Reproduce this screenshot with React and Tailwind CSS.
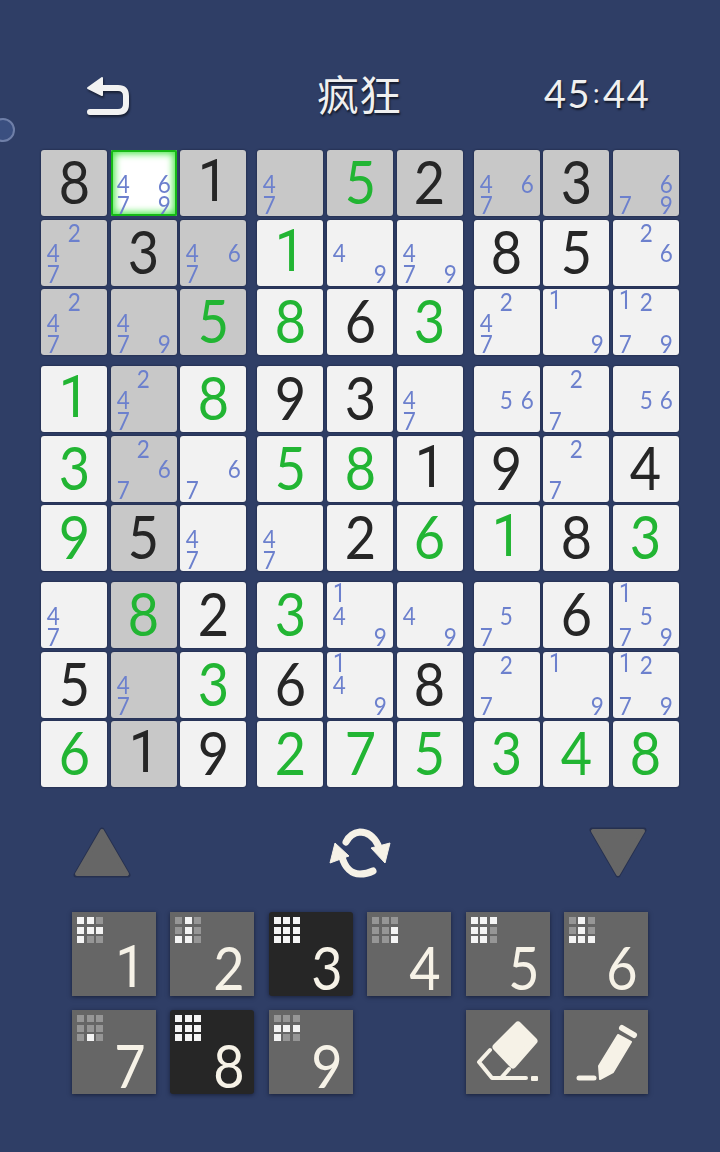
import React from "react";

// each row: digit = given, "g" prefix = entered by player (green), array = pencil marks
const rows = [
  [8, [4, 6, 7, 9], 1, [4, 7], "g5", 2, [4, 6, 7], 3, [6, 7, 9]],
  [[2, 4, 7], 3, [4, 6, 7], "g1", [4, 9], [4, 7, 9], 8, 5, [2, 6]],
  [[2, 4, 7], [4, 7, 9], "g5", "g8", 6, "g3", [2, 4, 7], [1, 9], [1, 2, 7, 9]],
  ["g1", [2, 4, 7], "g8", 9, 3, [4, 7], [5, 6], [2, 7], [5, 6]],
  ["g3", [2, 6, 7], [6, 7], "g5", "g8", 1, 9, [2, 7], 4],
  ["g9", 5, [4, 7], [4, 7], 2, "g6", "g1", 8, "g3"],
  [[4, 7], "g8", 2, "g3", [1, 4, 9], [4, 9], [5, 7], 6, [1, 5, 7, 9]],
  [5, [4, 7], "g3", 6, [1, 4, 9], 8, [2, 7], [1, 9], [1, 2, 7, 9]],
  ["g6", 1, 9, "g2", "g7", "g5", "g3", "g4", "g8"],
];

const selected = { r: 0, c: 1 };

const keys = [
  { n: 1, dots: "110111100" },
  { n: 2, dots: "010010110" },
  { n: 3, dots: "111111111", done: true },
  { n: 4, dots: "000001001" },
  { n: 5, dots: "111110110" },
  { n: 6, dots: "010010111" },
  { n: 7, dots: "000000010" },
  { n: 8, dots: "111111111", done: true },
  { n: 9, dots: "000111100" },
];

// Lato's 1 has a foot, Roboto's doesn't
const oneFont = (n) => (Number(n) === 1 ? "[font-family:Roboto,sans-serif]" : "");

const Notes = ({ marks }) => (
  <div className="grid h-[66px] w-[66px] grid-cols-3 grid-rows-3 p-[2px] text-[25px] leading-[20px] text-[#6c80cd]">
    {[1, 2, 3, 4, 5, 6, 7, 8, 9].map((n) => (
      <span key={n} className={`flex scale-x-90 items-center justify-center ${oneFont(n)}`}>
        {marks.includes(n) ? n : ""}
      </span>
    ))}
  </div>
);

const Cell = ({ value, r, c }) => {
  const isSelected = r === selected.r && c === selected.c;
  const sameBox = Math.floor(r / 3) === Math.floor(selected.r / 3) && Math.floor(c / 3) === Math.floor(selected.c / 3);
  const isPeer = r === selected.r || c === selected.c || sameBox;

  let bg = "bg-[#f2f2f2] rounded-[3px] shadow-[0_0_2px_rgba(15,20,40,0.8)]";
  if (isPeer) bg = "bg-[#c8c8c8] rounded-[3px] shadow-[0_0_2px_rgba(15,20,40,0.8)]";
  if (isSelected) bg = "bg-white rounded-[2px] shadow-[inset_0_0_0_2px_#16b816,inset_0_0_7px_4px_#4fe84f]";

  if (Array.isArray(value)) {
    return (
      <div className={`h-[66px] w-[66px] ${bg}`}>
        <Notes marks={value} />
      </div>
    );
  }

  const entered = typeof value === "string";
  const digit = entered ? value.slice(1) : value;
  return (
    <div className={`flex h-[66px] w-[66px] items-center justify-center pb-[4px] text-[60px] leading-[60px] ${bg} ${entered ? "text-[#22b533]" : "text-[#262626]"}`}>
      <span className={`scale-x-90 ${oneFont(digit)}`}>{digit}</span>
    </div>
  );
};

const Board = () => (
  <div className="mx-[41px] mt-[33px] grid grid-cols-3 gap-[11px]">
    {[0, 3, 6].map((br) =>
      [0, 3, 6].map((bc) => (
        <div key={`${br}-${bc}`} className="grid grid-cols-3 gap-[3.5px]">
          {[0, 1, 2].map((i) =>
            [0, 1, 2].map((j) => (
              <Cell key={`${i}-${j}`} value={rows[br + i][bc + j]} r={br + i} c={bc + j} />
            ))
          )}
        </div>
      ))
    )}
  </div>
);

const BackIcon = () => (
  <svg width="48" height="44" viewBox="0 0 48 44" className="drop-shadow-[1px_2px_1px_rgba(0,0,0,0.5)]">
    <path d="M17 5 L3 15 L17 22 Z" fill="#f2f2f2" stroke="#f2f2f2" strokeWidth="2" strokeLinejoin="round" />
    <path d="M15 15 H33 Q41 15 41 23 V31 Q41 39 33 39 H5" fill="none" stroke="#f2f2f2" strokeWidth="6" strokeLinecap="round" />
  </svg>
);

const Triangle = ({ down }) => (
  <svg width="58" height="52" viewBox="0 0 58 52">
    <path
      d={down ? "M3 3 H55 L29 48 Z" : "M29 3 L55 48 H3 Z"}
      fill="#26304f"
      stroke="#26304f"
      strokeWidth="5"
      strokeLinejoin="round"
    />
    <path d={down ? "M4 4 H54 L29 47 Z" : "M29 4 L54 47 H4 Z"} fill="#666666" stroke="#666666" strokeWidth="4" strokeLinejoin="round" />
  </svg>
);

const RefreshIcon = () => (
  <svg width="64" height="54" viewBox="0 0 64 54">
    <g fill="none" stroke="#f6f2e7" strokeWidth="7" strokeLinecap="round">
      <path d="M18 16 A18 18 0 0 1 32 6 C40 6 46 11 50 19" />
      <path d="M14 31 C17 42 24 48 32 48 C37 48 41 47 45 45" />
    </g>
    <path d="M43 22 L62 17 L57 37 Z" fill="#f6f2e7" stroke="#f6f2e7" strokeLinejoin="round" />
    <path d="M7 17 L2 37 L21 30 Z" fill="#f6f2e7" stroke="#f6f2e7" strokeLinejoin="round" />
  </svg>
);

const EraserIcon = () => (
  <svg width="84" height="84" viewBox="0 0 84 84">
    <path d="M52 15 L68 31 L47 55 L30 37 Z" fill="#f6f2e7" stroke="#f6f2e7" strokeWidth="7" strokeLinejoin="round" />
    <g fill="none" stroke="#f6f2e7" strokeWidth="4" strokeLinecap="round" strokeLinejoin="round">
      <path d="M24 40 L13 52 L26 68 H60" />
      <path d="M43 59 L35 68" />
    </g>
    <rect x="65" y="66" width="7" height="5" rx="1" fill="#f6f2e7" />
  </svg>
);

const PencilIcon = () => (
  <svg width="84" height="84" viewBox="0 0 84 84">
    <path d="M58 18 L70 25" stroke="#f6f2e7" strokeWidth="6" strokeLinecap="round" />
    <path d="M54 25 L67 32 L49 62 L36 69 L35 56 Z" fill="#f6f2e7" stroke="#f6f2e7" strokeWidth="2" strokeLinejoin="round" />
    <path d="M15 68 H30" stroke="#f6f2e7" strokeWidth="5" strokeLinecap="round" />
  </svg>
);

const NumberKey = ({ n, dots, done }) => (
  <div className={`flex h-[84px] w-[84px] flex-col text-[#f6f2e7] shadow-[0_1px_4px_rgba(15,20,40,0.7)] ${done ? "rounded-[3px] bg-[#262626]" : "bg-[#666666]"}`}>
    <div className="mt-[5px] ml-[5px] grid w-[26px] grid-cols-3 gap-[2.5px]">
      {dots.split("").map((d, i) => (
        <span key={i} className={`h-[7px] w-[7px] ${d === "1" ? "bg-[#f4f4f4]" : "bg-[#969696]"}`} />
      ))}
    </div>
    <span className={`-mt-[6px] scale-x-90 self-end pr-[9px] text-[60px] leading-[60px] ${oneFont(n)}`}>{n}</span>
  </div>
);

const ToolKey = ({ children }) => (
  <div className="h-[84px] w-[84px] bg-[#666666] shadow-[0_1px_4px_rgba(15,20,40,0.7)]">{children}</div>
);

export default function App() {
  return (
    <div className="relative h-[1152px] w-[720px] overflow-hidden bg-[#2f3e66] [font-family:Lato,sans-serif]">
      {/* small floating badge at the screen edge */}
      <div className="absolute top-[118px] -left-[9px] h-[24px] w-[24px] rounded-full border-2 border-[#6f7fa8] bg-[#3a4f80]" />

      <header className="flex h-[117px] items-end text-[#f0f0f0] [text-shadow:1px_2px_2px_rgba(0,0,0,0.6)]">
        <div className="ml-[85px] w-[48px]">
          <BackIcon />
        </div>
        <h1 className="ml-[184px] pb-[2px] text-[42px] leading-[44px] font-normal [font-family:'Noto_Sans_CJK_SC',sans-serif]">疯狂</h1>
        <span className="ml-[143px] pb-[2px] text-[38px] leading-[44px] tracking-[1.5px]">
          45<span className="px-[2px] align-[5px] text-[26px]">:</span>44
        </span>
      </header>

      <Board />

      <div className="mx-[73px] mt-[39px] flex h-[54px] items-center justify-between">
        <Triangle />
        <RefreshIcon />
        <Triangle down />
      </div>

      <div className="mt-[32px] ml-[72px] grid w-[576px] grid-cols-6 gap-x-[14.4px] gap-y-[14px]">
        {keys.map((k) => (
          <NumberKey key={k.n} {...k} />
        ))}
        <div />
        <ToolKey>
          <EraserIcon />
        </ToolKey>
        <ToolKey>
          <PencilIcon />
        </ToolKey>
      </div>
    </div>
  );
}
